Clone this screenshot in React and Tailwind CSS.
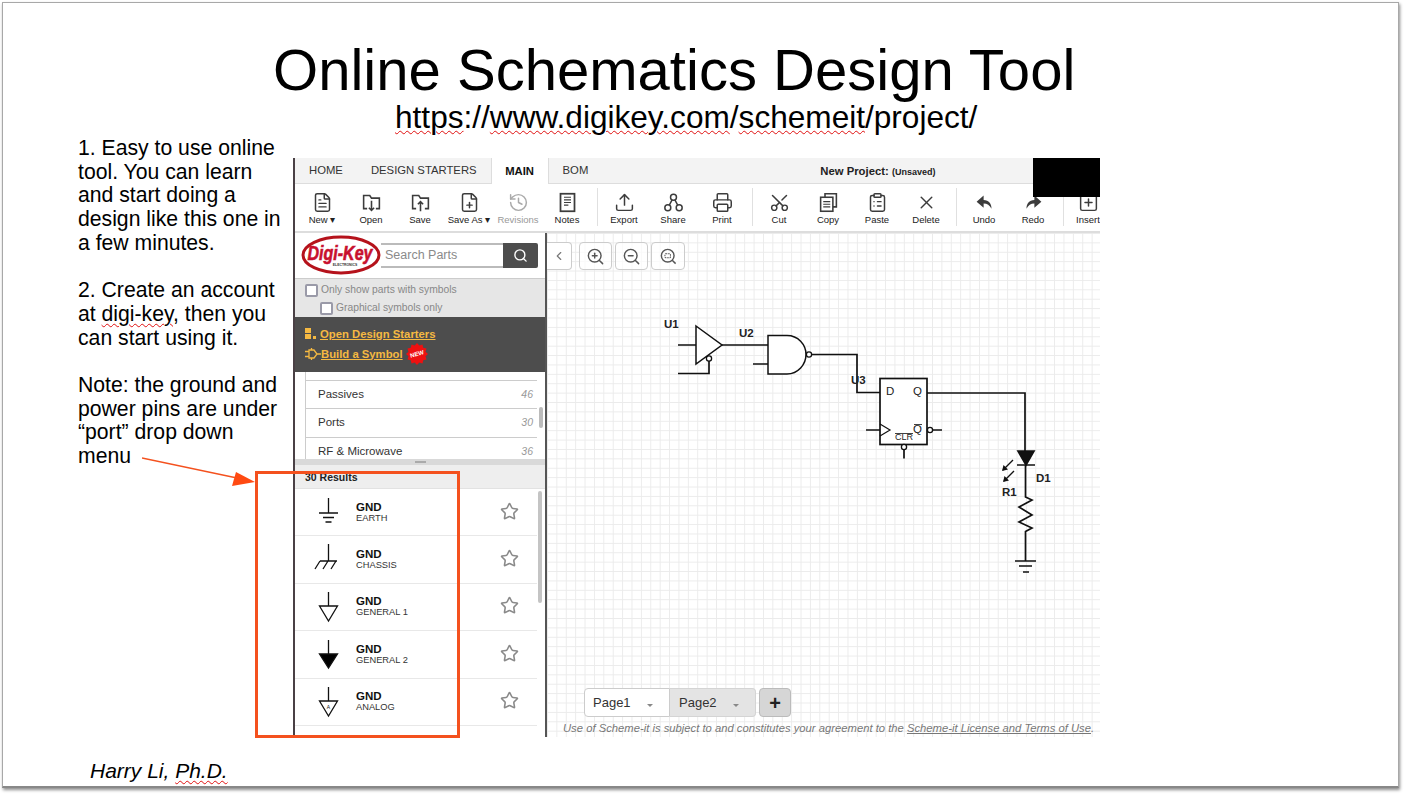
import React from 'react';
import {
    ChevronLeft,
    ClipboardList,
    FilePlus,
    FileText,
    History,
    Printer,
    Scissors,
    Search,
    SquarePlus,
    Star,
    Upload,
    X,
    ZoomIn,
    ZoomOut,
} from 'lucide-react';

const Squiggle = ({ children }) => (
    <span className="underline decoration-wavy decoration-[#e01010] decoration-[1px] underline-offset-[2px]">{children}</span>
);

const iconProps = { size: 21, strokeWidth: 1.7 };

const FolderArrow = ({ up }) => (
    <svg width="21" height="21" viewBox="0 0 24 24" fill="none" stroke="currentColor" strokeWidth="1.8">
        <path d="M7 19H3V4h7l2 3h9v12h-4" />
        <path d={up ? 'M12 22V11M9 14l3-3 3 3' : 'M12 10v11M9 18l3 3 3-3'} />
    </svg>
);

const NotesIcon = () => (
    <svg width="21" height="21" viewBox="0 0 24 24" fill="none" stroke="currentColor" strokeWidth="2">
        <rect x="4" y="2" width="16" height="20" />
        <path d="M8 6h8M8 9h8M8 12h8M8 15h5" strokeWidth="1.4" />
    </svg>
);

const ShareIcon = () => (
    <svg width="21" height="21" viewBox="0 0 24 24" fill="none" stroke="currentColor" strokeWidth="1.7">
        <circle cx="12" cy="6" r="3.4" />
        <circle cx="5.5" cy="18" r="3.4" />
        <circle cx="18.5" cy="18" r="3.4" />
        <path d="M10.4 9 7.2 15M13.6 9l3.2 6" />
    </svg>
);

const CopyIcon = () => (
    <svg width="21" height="21" viewBox="0 0 24 24" fill="none" stroke="currentColor" strokeWidth="1.8">
        <path d="M8 6V2h13v15h-4" />
        <rect x="3" y="6" width="14" height="16" />
        <path d="M6 11h8M6 14h8M6 17h8" strokeWidth="1.3" />
    </svg>
);

const UndoIcon = ({ flip }) => (
    <svg width="21" height="21" viewBox="0 0 24 24" fill="currentColor" className={flip ? '-scale-x-100' : ''}>
        <path d="M11 4 3 11l8 7v-5c4 0 7 2 9 6 0-6-3-10-9-10z" />
    </svg>
);

const ZoomFit = () => (
    <svg width="19" height="19" viewBox="0 0 24 24" fill="none" stroke="currentColor" strokeWidth="1.800">
        <circle cx="11" cy="11" r="8" />
        <path d="m21 21-4.300-4.300" />
        <rect x="7.500" y="8.500" width="7" height="5" rx="1" strokeWidth="1.300" strokeDasharray="2 1" />
    </svg>
);

const toolGroups = [
    [
        { label: 'New ▾', icon: <FileText {...iconProps} /> },
        { label: 'Open', icon: <FolderArrow /> },
        { label: 'Save', icon: <FolderArrow up /> },
        { label: 'Save As ▾', icon: <FilePlus {...iconProps} /> },
        { label: 'Revisions', icon: <History {...iconProps} />, muted: true },
        { label: 'Notes', icon: <NotesIcon /> },
    ],
    [
        { label: 'Export', icon: <Upload {...iconProps} /> },
        { label: 'Share', icon: <ShareIcon /> },
        { label: 'Print', icon: <Printer {...iconProps} /> },
    ],
    [
        { label: 'Cut', icon: <Scissors {...iconProps} className="-rotate-90" /> },
        { label: 'Copy', icon: <CopyIcon /> },
        { label: 'Paste', icon: <ClipboardList {...iconProps} /> },
        { label: 'Delete', icon: <X {...iconProps} /> },
    ],
    [
        { label: 'Undo', icon: <UndoIcon /> },
        { label: 'Redo', icon: <UndoIcon flip /> },
    ],
    [{ label: 'Insert', icon: <SquarePlus {...iconProps} /> }],
];

// spacing around the separator in front of each toolbar group
const separatorMargins = ['', 'ml-[5px] mr-[2px]', 'ml-[5px] mr-[2px]', 'ml-[5px] mr-[3px]', 'ml-[5px] mr-0'];

const ToolButton = ({ label, icon, muted }) => (
    <div className={`w-[49px] shrink-0 flex flex-col items-center ${muted ? 'text-[#aaa]' : 'text-[#3c3c3c]'}`}>
        <div className="h-[24px] flex items-center justify-center">{icon}</div>
        <span className={`text-[9.5px] leading-[12px] whitespace-nowrap ${muted ? 'text-[#999]' : 'text-[#222]'}`}>{label}</span>
    </div>
);

const Logo = () => (
    <svg width="80" height="40" viewBox="0 0 80 40" className="shrink-0">
        <ellipse cx="40" cy="20" rx="38" ry="18" fill="#fff" stroke="#b5121b" strokeWidth="3" />
        <g transform="translate(39 25) scale(0.8 1)">
            <text x="0" y="0" textAnchor="middle" fontSize="20" fontWeight="700" fontStyle="italic" fill="#c8102e" stroke="#c8102e" strokeWidth="0.6" fontFamily="Liberation Sans">
                Digi-Key
            </text>
        </g>
        <text x="44" y="30.5" textAnchor="middle" fontSize="3.4" fontWeight="700" fill="#333" fontFamily="Liberation Sans">
            ELECTRONICS
        </text>
    </svg>
);

const burst = Array.from({ length: 24 }, (_, i) => {
    const r = i % 2 === 0 ? 11 : 8.8;
    const a = (i * Math.PI) / 12;
    return `${(11 + r * Math.cos(a)).toFixed(1)},${(11 + r * Math.sin(a)).toFixed(1)}`;
}).join(' ');

const NewBadge = () => (
    <svg width="22" height="22" viewBox="0 0 22 22" className="shrink-0">
        <polygon points={burst} fill="#ee1111" />
        <text x="11" y="13" textAnchor="middle" fontSize="6" fill="#fff" fontFamily="Liberation Sans" transform="rotate(-15 11 11)">
            NEW
        </text>
    </svg>
);

const categories = [
    { name: 'Passives', count: 46, h: 'h-[28px]' },
    { name: 'Ports', count: 30, h: 'h-[29px]' },
    { name: 'RF & Microwave', count: 36, h: 'h-[28px]' },
];

const GndSymbol = ({ type }) => (
    <svg width="40" height="47" viewBox="0 0 40 47" fill="none" stroke="#111" strokeWidth="1.3" className="shrink-0">
        {type === 'earth' && <path d="M19.5 9v15M10 24h19M14 28.500h11M16.500 33h6" />}
        {type === 'chassis' && <path d="M19.500 8v17M11 25h17M11 25l-5 8M19 25l-5 8M27 25l-5 8" />}
        {type === 'general1' && <path d="M19.500 9v14M10.500 23h18l-9 15z" />}
        {type === 'general2' && <path d="M19.500 9v14M10.500 23h18l-9 14z" fill="#000" />}
        {type === 'analog' && (
            <>
                <path d="M19.500 9v14M10.500 23h18l-9 15z" />
                <text x="19.500" y="31" textAnchor="middle" fontSize="5" fill="#111" stroke="none" fontFamily="Liberation Sans">A</text>
            </>
        )}
    </svg>
);

const results = [
    { sub: 'EARTH', type: 'earth' },
    { sub: 'CHASSIS', type: 'chassis' },
    { sub: 'GENERAL 1', type: 'general1' },
    { sub: 'GENERAL 2', type: 'general2' },
    { sub: 'ANALOG', type: 'analog' },
];

const ResultRow = ({ sub, type }) => (
    <div className="h-[47.4px] shrink-0 flex items-center pl-[14px] w-[242px] border-b border-[#e8e8e8]">
        <GndSymbol type={type} />
        <div className="ml-[7px] flex flex-col -mt-[1px]">
            <span className="text-[11.5px] leading-[12px] font-bold text-[#111]">GND</span>
            <span className="text-[9.3px] leading-[10px] text-[#333]">{sub}</span>
        </div>
        <Star size={19} strokeWidth={2} className="ml-auto mr-[18px] -mt-[2px] text-[#8a8a8a]" />
    </div>
);

const GndSymbolStub = () => (
    <div className="pl-[33px] pt-[9px]">
        <div className="w-[1.300px] h-[3px] bg-[#111]" />
    </div>
);

const Sidebar = () => (
    <div className="w-[252px] shrink-0 border-r-2 border-[#555] flex flex-col overflow-hidden">
        <div className="h-[45px] shrink-0 flex items-center pl-[6px] pb-[1px]">
            <Logo />
            <div className="w-[122px] h-[25px] border-y-2 border-[#bbb] flex items-center pl-[4px] text-[12.5px] text-[#8a8a8a]">Search Parts</div>
            <div className="w-[35px] h-[25px] bg-[#4d4d4d] rounded-r-[2px] flex items-center justify-center">
                <Search size={15} strokeWidth={2.2} className="text-white" />
            </div>
        </div>
        <div className="h-[39px] shrink-0 bg-[#e6e6e6] border-t border-[#ccc] pl-[10px] pt-[4px] text-[10.3px] text-[#888]">
            <div className="flex items-center gap-[3px] h-[14px]">
                <span className="w-[13px] h-[13px] bg-white border-2 border-[#9a9aa8] rounded-[2px]" />
                Only show parts with symbols
            </div>
            <div className="flex items-center gap-[3px] h-[14px] mt-[4px] ml-[15px]">
                <span className="w-[13px] h-[13px] bg-white border-2 border-[#9a9aa8] rounded-[2px]" />
                Graphical symbols only
            </div>
        </div>
        <div className="h-[55px] shrink-0 bg-[#4d4d4d] pl-[10px] pt-[9px] text-[11.3px] font-bold text-[#f5b942]">
            <div className="flex items-center gap-[4px] h-[16px]">
                <svg width="11" height="12" viewBox="0 0 11 12" fill="#f5b942" className="shrink-0">
                    <rect x="0" y="0" width="6" height="5" />
                    <rect x="0" y="6" width="6" height="5" />
                    <rect x="8" y="8" width="3" height="3" />
                </svg>
                <span className="underline">Open Design Starters</span>
            </div>
            <div className="flex items-center h-[22px] mt-[1px]">
                <svg width="16" height="12" viewBox="0 0 16 12" fill="none" stroke="#f5b942" strokeWidth="1.3" className="shrink-0">
                    <path d="M4 2h5l3 4-3 4H4zM0 3.500h4M0 8.500h4M12 6h4M6.500 0v2M6.500 10v2" />
                </svg>
                <span className="underline">Build a Symbol</span>
                <span className="ml-[3px]"><NewBadge /></span>
            </div>
        </div>
        <div className="h-[87px] shrink-0 overflow-hidden relative pl-[10px]">
            <div className="w-[232px] border-l border-[#ccc] pt-[8px]">
                {categories.map((c) => (
                    <div key={c.name} className={`${c.h} border-t border-[#ccc] flex items-center justify-between pl-[12px] pr-[4px] text-[11.5px] text-[#333]`}>
                        {c.name}
                        <span className="text-[10.5px] italic text-[#999]">{c.count}</span>
                    </div>
                ))}
            </div>
            <div className="absolute left-[244px] top-[35px] w-[4px] h-[21px] rounded bg-[#bbb]" />
        </div>
        <div className="h-[6px] shrink-0 bg-[#d9d9d9] flex items-center justify-center">
            <span className="w-[11px] h-[1.500px] bg-[#aaa]" />
        </div>
        <div className="h-[24px] shrink-0 bg-[#eeeeee] border-b border-[#e2e2e2] pl-[10px] pt-[2px] flex items-center text-[10.5px] font-bold text-[#222]">30 Results</div>
        <div className="relative flex flex-col overflow-hidden grow">
            {results.map((r) => (
                <ResultRow key={r.sub} {...r} />
            ))}
            <GndSymbolStub />
            <div className="absolute left-[243px] top-[2px] w-[4px] h-[112px] rounded bg-[#c4c4c4]" />
        </div>
    </div>
);

const Schematic = () => (
    <svg width="553" height="504" viewBox="547 233 553 504" fill="none" stroke="#111" strokeWidth="1.700" className="absolute left-0 top-0">
        {/* buffer U1 */}
        <path d="M696 326 722 345 696 364z" strokeWidth="1.500" fill="#fff" />
        <path d="M678 345h18M678 373.500h31V361M722 345h46" />
        <circle cx="709" cy="358.500" r="2.600" fill="#fff" strokeWidth="1.300" />
        {/* nand U2 */}
        <path d="M768 335.500h19c11 0 19 9 19 19s-8 19.500-19 19.500h-19z" strokeWidth="1.500" fill="#fff" />
        <circle cx="809" cy="354.500" r="2.600" fill="#fff" strokeWidth="1.300" />
        <path d="M753 364h15M812 354.500h45V392.500H880" />
        {/* flip flop U3 */}
        <rect x="880" y="378.500" width="47" height="66" fill="#fff" />
        <path d="M880 424 890 430 880 436" strokeWidth="1.200" />
        <path d="M866 430h14M933 430h9M904 450v8.500M927 393h98v58" />
        <circle cx="930" cy="430" r="2.600" fill="#fff" strokeWidth="1.300" />
        <circle cx="904" cy="447" r="2.600" fill="#fff" strokeWidth="1.300" />
        <path d="M895 433.500h18M914 424.500h8" strokeWidth="0.800" />
        {/* led + resistor + ground */}
        <path d="M1018 451h16l-8 14z" fill="#111" />
        <path d="M1017 465h18M1025.500 465v32l6.500 3-13 7 13 8-13 7 13 6-6.500 3.500V561M1015 561h21M1019 566h13M1023 572h6" />
        <path d="M1013 460 1003 470M1014 471 1004 481" strokeWidth="1.400" />
        <path d="M1002 471l6-1.500-4.500-4.500zM1003 482l6-1.500-4.500-4.500z" fill="#111" stroke="none" />
        <g fill="#222" stroke="none" fontFamily="Liberation Sans" fontSize="11.500" fontWeight="700">
            <text x="664" y="328">U1</text>
            <text x="739" y="337">U2</text>
            <text x="851" y="384">U3</text>
            <text x="1036" y="482">D1</text>
            <text x="1002" y="496">R1</text>
        </g>
        <g fill="#222" stroke="none" fontFamily="Liberation Sans" fontSize="11.500">
            <text x="886" y="395">D</text>
            <text x="913" y="395">Q</text>
            <text x="913" y="433">Q</text>
            <text x="895" y="440" fontSize="9">CLR</text>
        </g>
    </svg>
);

const CanvasButton = ({ children, w }) => (
    <div className={`${w} h-[28px] bg-white/70 border border-[#ccc] rounded-[4px] flex items-center justify-center text-[#555]`}>{children}</div>
);

const Canvas = () => (
    <div className="relative grow flex flex-col overflow-hidden bg-white bg-[linear-gradient(#ebebeb_1px,transparent_1px),linear-gradient(90deg,#ebebeb_1px,transparent_1px)] bg-[size:9.400px_9.400px]">
        <Schematic />
        <div className="relative flex items-center gap-[3px] mt-[9px]">
            <div className="w-[25px] h-[28px] bg-white border border-[#ccc] border-l-0 rounded-r-[4px] flex items-center justify-center text-[#777] mr-[4px]">
                <ChevronLeft size={14} />
            </div>
            <CanvasButton w="w-[33px]"><ZoomIn size={19} strokeWidth={1.800} /></CanvasButton>
            <CanvasButton w="w-[33px]"><ZoomOut size={19} strokeWidth={1.800} /></CanvasButton>
            <CanvasButton w="w-[34px]"><ZoomFit /></CanvasButton>
        </div>
        <div className="relative mt-auto flex items-stretch ml-[37px] h-[29px]">
            <div className="w-[86px] bg-white border border-[#ccc] rounded-l-[4px] flex items-center pl-[8px] text-[13px] text-[#333]">
                Page1
                <span className="ml-[16px] mt-[6px] border-x-[3px] border-t-[3px] border-x-transparent border-t-[#888]" />
            </div>
            <div className="w-[86px] bg-[#e4e4e4] border border-l-0 border-[#d4d4d4] rounded-r-[4px] flex items-center pl-[9px] text-[13px] text-[#333]">
                Page2
                <span className="ml-[16px] mt-[6px] border-x-[3px] border-t-[3px] border-x-transparent border-t-[#888]" />
            </div>
            <div className="ml-[3px] w-[32px] bg-[#d6d6d6] border border-[#bbb] rounded-[4px] flex items-center justify-center text-[20px] leading-none font-bold text-[#222]">+</div>
        </div>
        <div className="relative mt-[5px] mb-[2px] ml-[16px] text-[11.250px] leading-[13px] italic text-[#777] whitespace-nowrap">
            Use of Scheme-it is subject to and constitutes your agreement to the <span className="underline">Scheme-it License and Terms of Use</span>.
        </div>
    </div>
);

const ToolPanel = () => (
    <div className="relative w-[807px] h-[579px] mt-[23px] shrink-0 border-l-2 border-[#4a4045] flex flex-col overflow-hidden">
        <div className="h-[26px] shrink-0 bg-[#f3f3f3] border-b border-[#ddd] flex items-end text-[11.3px] text-[#333]">
            <span className="ml-[14px] h-[25px] flex items-center">HOME</span>
            <span className="ml-[28px] h-[25px] flex items-center">DESIGN STARTERS</span>
            <span className="ml-[14px] w-[58px] h-[27px] bg-white border border-b-0 border-[#ddd] flex items-center justify-center font-bold text-[#111] -mb-[1px]">MAIN</span>
            <span className="ml-[14px] h-[25px] flex items-center">BOM</span>
            <span className="ml-[232px] h-[25px] flex items-baseline pt-[5px] font-bold text-[11.300px] text-[#222] whitespace-nowrap">
                New Project:&nbsp;<span className="text-[9px]">(Unsaved)</span>
            </span>
        </div>
        <div className="h-[49px] shrink-0 bg-white border-b-2 border-[#ddd] flex items-start pl-[2.500px] pt-[6px]">
            {toolGroups.map((group, i) => (
                <React.Fragment key={group[0].label}>
                    {i > 0 && <div className={`w-[1px] h-[38px] bg-[#e0e0e0] shrink-0 -mt-[2px] ${separatorMargins[i]}`} />}
                    {group.map((tool) => (
                        <ToolButton key={tool.label} {...tool} />
                    ))}
                </React.Fragment>
            ))}
        </div>
        <div className="flex grow min-h-0">
            <Sidebar />
            <Canvas />
        </div>
        <div className="absolute right-0 top-0 w-[67px] h-[39px] bg-black" />
    </div>
);

const App = () => (
    <div className="relative w-[1410px] h-[796px] bg-white overflow-hidden font-['Liberation_Sans',sans-serif] text-black">
        <div className="relative ml-[2px] mt-[2px] w-[1397px] h-[786px] border border-[#a8a8a8] border-b-[2px] border-b-[#888] shadow-[1px_2px_3px_rgba(0,0,0,0.45)] flex flex-col">
            <h1 className="ml-[270px] mt-[33px] text-[58.050px] leading-[68px] whitespace-nowrap">Online Schematics Design Tool</h1>
            <div className="ml-[392px] -mt-[4px] text-[31.600px] leading-[34px] whitespace-nowrap">
                <Squiggle>https</Squiggle>://<Squiggle>www.digikey.com</Squiggle>/<Squiggle>schemeit</Squiggle>/project/
            </div>
            <div className="flex mt-[1px]">
                <div className="w-[215px] ml-[75px] shrink-0 text-[21.200px] leading-[23.700px] whitespace-nowrap pt-[1px]">
                    1. Easy to use online<br />
                    tool. You can learn<br />
                    and start doing a<br />
                    design like this one in<br />
                    a few minutes.<br />
                    <br />
                    2. Create an account<br />
                    at <Squiggle>digi-key</Squiggle>, then you<br />
                    can start using it.<br />
                    <br />
                    Note: the ground and<br />
                    power pins are under<br />
                    “port” drop down<br />
                    menu
                </div>
                <ToolPanel />
            </div>
            <div className="ml-[87px] mt-[22px] text-[21px] leading-[24px] italic whitespace-nowrap">
                Harry Li, <Squiggle>Ph.D.</Squiggle>
            </div>
            {/* red callout drawn over the slide */}
            <svg width="330" height="300" viewBox="0 0 330 300" fill="none" className="absolute left-[139px] top-[452px]">
                <path d="M0 3 95 23" stroke="#f4511e" strokeWidth="1.300" />
                <path d="M94 17 113 27 90 31z" fill="#ff4a12" />
            </svg>
            <div className="absolute left-[252px] top-[468px] w-[205px] h-[267px] border-[3px] border-[#f4511e]" />
        </div>
    </div>
);

export default App;
